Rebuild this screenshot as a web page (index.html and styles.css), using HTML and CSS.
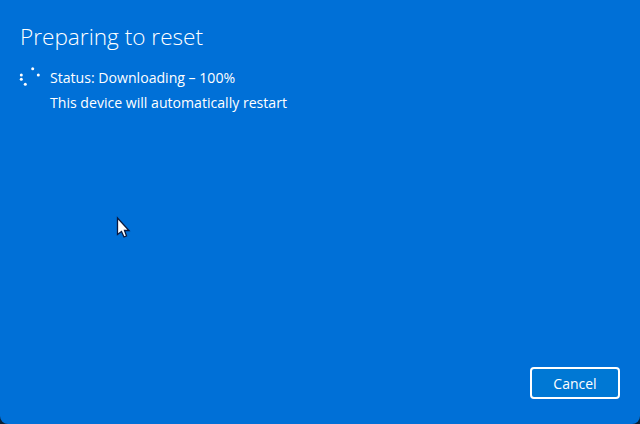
FILE: index.html
```html
<!DOCTYPE html>
<html lang="en">
<head>
<meta charset="utf-8">
<title>Preparing to reset</title>
<link rel="stylesheet" href="styles.css">
</head>
<body>
<main class="dialog">
  <h1 class="title">Preparing to reset</h1>
  <section class="status">
    <svg class="spinner" width="24" height="22" viewBox="0 0 24 22" aria-hidden="true">
      <circle cx="14.7" cy="3.7" r="1.5"/>
      <circle cx="20.3" cy="10" r="1.5"/>
      <circle cx="3.3" cy="10" r="1.5"/>
      <circle cx="3.3" cy="14.3" r="1.5"/>
      <circle cx="7.3" cy="19.3" r="1.5"/>
    </svg>
    <div class="messages">
      <p class="line">Status: Downloading – 100%</p>
      <p class="line">This device will automatically restart</p>
    </div>
  </section>
  <footer class="actions">
    <button class="cancel" type="button">Cancel</button>
  </footer>
  <svg class="cursor" width="16" height="23" viewBox="0 0 16 23" aria-hidden="true">
    <path d="M1.5 2 L1.5 18.5 L5.5 15.5 L8 21 L10.5 20 L8.5 14.5 L13 14.5 Z"/>
  </svg>
</main>
</body>
</html>
```
FILE: styles.css
```css
html, body {
  margin: 0;
  padding: 0;
  height: 100%;
  background: #0b2136;
}
.dialog {
  position: relative;
  box-sizing: border-box;
  height: 424px;
  width: 640px;
  display: flex;
  flex-direction: column;
  padding: 21px 20px 25px 20px;
  background: #0070d7;
  border-radius: 0 0 8px 8px;
  color: #fff;
  font-family: "Open Sans", "Noto Sans", sans-serif;
  overflow: hidden;
}
.title {
  margin: 0;
  font-size: 22.6px;
  font-weight: 300;
  line-height: 32px;
}
.status {
  display: flex;
  gap: 8px;
  margin-top: 11px;
  margin-left: -2px;
}
.spinner {
  fill: #fff;
  flex: none;
  margin-top: 1px;
}
.messages {
  padding-top: 5px;
}
.line {
  margin: 0 0 7px;
  font-size: 14.1px;
  line-height: 18px;
}
.actions {
  margin-top: auto;
  display: flex;
  justify-content: flex-end;
}
.cancel {
  width: 90px;
  height: 32px;
  box-sizing: border-box;
  border: 2px solid #fff;
  border-radius: 4px;
  background: #0078d4;
  color: #fff;
  font: inherit;
  font-size: 14px;
  padding: 0;
}
.cursor {
  position: absolute;
  left: 116px;
  top: 216px;
  fill: #fff;
  stroke: #0a1a40;
  stroke-width: 1.3;
}
```
